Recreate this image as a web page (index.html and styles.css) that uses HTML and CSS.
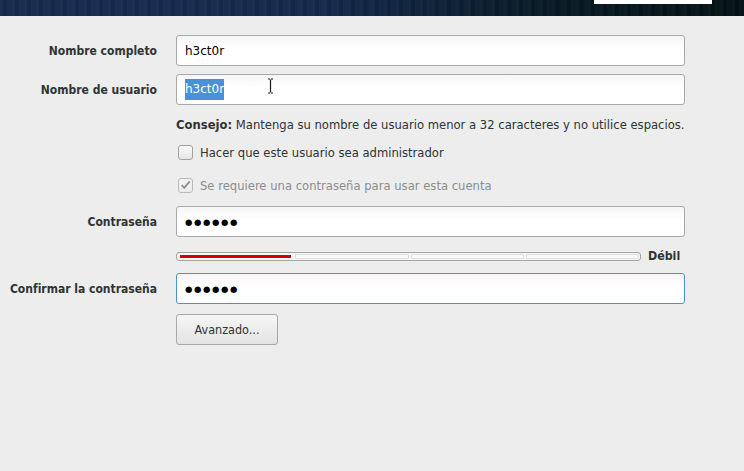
FILE: index.html
```html
<!DOCTYPE html>
<html lang="es">
<head>
<meta charset="utf-8">
<title>Crear usuario</title>
<link rel="stylesheet" href="styles.css">
</head>
<body>
<div class="header"><div class="header-tab"></div></div>
<div class="form">
  <div class="row r-name">
    <div class="label">Nombre completo</div>
    <div class="entry"><span class="etext">h3ct0r</span></div>
  </div>
  <div class="row r-user">
    <div class="label">Nombre de usuario</div>
    <div class="entry"><span class="sel">h3ct0r</span>
      <svg class="ibeam" width="7" height="16" viewBox="0 0 7 16"><path d="M1 1h2M4 1h2M3.5 1.5v13M1 15h2M4 15h2" stroke="#1a1a1a" stroke-width="1.2" fill="none"/></svg>
    </div>
  </div>
  <div class="row r-hint">
    <div></div>
    <div class="text"><b>Consejo:</b> Mantenga su nombre de usuario menor a 32 caracteres y no utilice espacios.</div>
  </div>
  <div class="row r-admin">
    <div></div>
    <div class="check"><span class="box"></span><span>Hacer que este usuario sea administrador</span></div>
  </div>
  <div class="row r-req">
    <div></div>
    <div class="check disabled"><span class="box checked"><svg width="14" height="14" viewBox="0 0 14 14"><path d="M3 7.2l2.6 2.8L11.5 3" stroke="#8e9192" stroke-width="2" fill="none"/></svg></span><span>Se requiere una contraseña para usar esta cuenta</span></div>
  </div>
  <div class="row r-pass">
    <div class="label">Contraseña</div>
    <div class="entry"><span class="dots">●●●●●●</span></div>
  </div>
  <div class="row r-bar">
    <div></div>
    <div class="strength">
      <div class="bar">
        <div class="seg"><div class="fill"></div></div>
        <div class="seg"></div>
        <div class="seg"></div>
        <div class="seg"></div>
      </div>
      <span class="level">Débil</span>
    </div>
  </div>
  <div class="row r-confirm">
    <div class="label">Confirmar la contraseña</div>
    <div class="entry focused"><span class="dots">●●●●●●</span></div>
  </div>
  <div class="row r-adv">
    <div></div>
    <div><button class="btn">Avanzado...</button></div>
  </div>
</div>
</body>
</html>
```
FILE: styles.css
```css
html, body {
  margin: 0;
  padding: 0;
  background: #ededed;
  width: 744px;
  height: 471px;
  overflow: hidden;
  font-family: "DejaVu Sans Condensed", "DejaVu Sans", sans-serif;
  font-size: 12.9px;
  color: #2e3436;
}
.header {
  height: 16px;
  display: flex;
  justify-content: flex-end;
  align-items: flex-start;
  background:
    repeating-linear-gradient(to right, rgba(255,255,255,0.03) 0 3px, rgba(0,0,0,0.04) 3px 7px, rgba(255,255,255,0.02) 7px 12px),
    linear-gradient(to right, #152a4d 0%, #142b4e 25%, #112848 45%, #0c1f33 62%, #06171f 80%, #021315 100%);
}
.header-tab {
  width: 118px;
  height: 4px;
  background: #ffffff;
  margin-right: 32px;
}
.form {
  padding-top: 19px;
}
.row {
  display: grid;
  grid-template-columns: 157px 509px;
  column-gap: 19px;
  align-items: center;
}
.label {
  text-align: right;
  font-weight: bold;
  font-size: 12px;
  white-space: nowrap;
}
.entry {
  position: relative;
  box-sizing: border-box;
  height: 31px;
  border: 1px solid #a9a9a9;
  border-radius: 3px;
  background: linear-gradient(#f6f6f6, #ffffff 45%);
  display: flex;
  align-items: center;
  padding-left: 8px;
  font-family: "DejaVu Sans", sans-serif;
  font-size: 12px;
  color: #000;
}
.entry.focused {
  border-color: #4a90d9;
}
.sel {
  display: inline-block;
  background: #4a90d9;
  color: #fff;
  line-height: 21px;
  height: 21px;
}
.ibeam {
  position: absolute;
  left: 90px;
  top: 3px;
}
.dots {
  font-size: 8.5px;
  letter-spacing: 1.6px;
  color: #000;
}
.r-name { margin-top: 0; }
.r-user { margin-top: 8px; }
.r-hint { margin-top: 10px; line-height: 20px; }
.r-hint b { font-weight: bold; }
.r-admin { margin-top: 7px; }
.r-req { margin-top: 13px; }
.r-pass { margin-top: 11px; }
.r-bar { margin-top: 9px; }
.r-confirm { margin-top: 7px; }
.r-adv { margin-top: 10px; }
.text { white-space: nowrap; }
.check {
  display: flex;
  align-items: center;
  height: 20px;
  white-space: nowrap;
}
.check .box {
  box-sizing: border-box;
  width: 15px;
  height: 15px;
  margin-left: 2px;
  margin-right: 7px;
  border: 1px solid #a1a1a1;
  border-radius: 3px;
  background: linear-gradient(#fafafa, #e6e6e6);
  display: flex;
  align-items: center;
  justify-content: center;
}
.check .box svg { display: block; }
.check.disabled { color: #8b8e8f; }
.check.disabled .box {
  border-color: #b9b9b9;
  background: linear-gradient(#f4f4f4, #ebebeb);
}
.strength {
  display: flex;
  align-items: center;
  height: 20px;
}
.bar {
  box-sizing: border-box;
  width: 465px;
  height: 9px;
  border: 1px solid #a4a4a4;
  border-radius: 3px;
  background: #f7f7f7;
  display: flex;
  padding: 1px 1px;
  gap: 2px;
}
.seg {
  flex: 1;
  box-sizing: border-box;
  border: 1px solid #dedede;
  border-radius: 1px;
  background: #fbfbfb;
}
.seg:first-child {
  border: none;
  padding: 1px 2px;
}
.fill {
  height: 3px;
  background: #d40000;
}
.level {
  margin-left: 7px;
  font-weight: bold;
  font-size: 12.3px;
}
.btn {
  box-sizing: border-box;
  width: 102px;
  height: 31px;
  border: 1px solid #a8a8a8;
  border-radius: 3px;
  background: linear-gradient(#f6f6f6, #e3e3e3);
  font-family: "DejaVu Sans Condensed", "DejaVu Sans", sans-serif;
  font-size: 12.5px;
  color: #2e3436;
  padding: 0;
}
```
